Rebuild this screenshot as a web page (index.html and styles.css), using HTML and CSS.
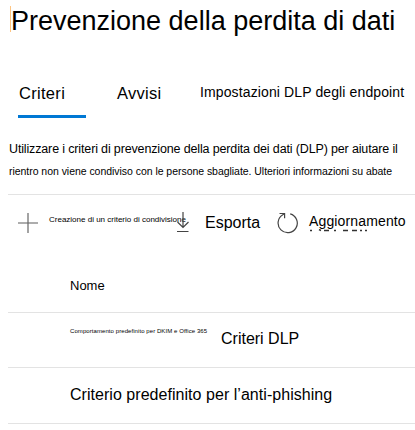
FILE: index.html
```html
<!DOCTYPE html>
<html lang="it">
<head>
<meta charset="utf-8">
<title>Prevenzione della perdita di dati</title>
<link rel="stylesheet" href="styles.css">
</head>
<body>
<main class="page">
  <h1 class="title"><span>Prevenzione della perdita di dati</span></h1>
  <nav class="tabs">
    <a class="tab tab-active"><span>Criteri</span></a>
    <a class="tab tab-alerts"><span>Avvisi</span></a>
    <a class="tab tab-settings"><span>Impostazioni DLP degli endpoint</span></a>
  </nav>
  <div class="intro">
    <p class="intro-main"><span>Utilizzare i criteri di prevenzione della perdita dei dati (DLP) per aiutare il</span></p>
    <p class="intro-sub"><span>rientro non viene condiviso con le persone sbagliate. Ulteriori informazioni su abate</span></p>
  </div>
  <div class="toolbar">
    <svg class="icon icon-add" viewBox="0 0 20 20"><path d="M0 10H20" stroke="#777" stroke-width="1.2"/><path d="M10 0V20" stroke="#666" stroke-width="1.2"/></svg>
    <span class="create">Creazione di un criterio di condivisione</span>
    <svg class="icon icon-export" viewBox="0 0 14 21"><path d="M7 0V15.5M1.5 10L7 15.5L12.5 10M1 19.5H12.5" fill="none" stroke="#444" stroke-width="1.2"/></svg>
    <span class="export">Esporta</span>
    <svg class="icon icon-refresh" viewBox="0 0 22 22"><path d="M13.2 1.8A9.6 9.6 0 1 1 5.8 2.8L7.6 1.5M2.5 1.5H7.6V6.3" fill="none" stroke="#444" stroke-width="1.2"/></svg>
    <span class="refresh">Aggiornamento
      <svg class="marks" viewBox="0 0 60 3"><path d="M1 1.5H3M10 .5L12 1.5M15 1.5H20M25 1.5H27M34 1.5H39M43 1.5H48M51 1.5H53M56 1.5H58" fill="none" stroke="#333" stroke-width="1.4"/></svg>
    </span>
  </div>
  <section class="list">
    <div class="row row-head"><span>Nome</span></div>
    <div class="row row-first"><span class="tiny">Comportamento predefinito per DKIM e Office 365</span><span class="dlp">Criteri DLP</span></div>
    <div class="row row-last"><span>Criterio predefinito per l’anti-phishing</span></div>
  </section>
</main>
</body>
</html>
```
FILE: styles.css
```css
* { box-sizing: border-box; }
body { margin: 0; background: #fff; color: #000; font-family: "Liberation Sans", Arial, sans-serif; overflow: hidden; }
.page { width: 415px; height: 430px; padding-left: 8px; white-space: nowrap; }
.title { position: relative; margin: 0; padding-left: 3px; height: 42px; line-height: 42px; font-size: 27px; font-weight: 400; }
.title::before { content: ""; position: absolute; left: 2px; top: 6px; width: 1px; height: 26px; background: #ffc581; }
.tabs { display: flex; height: 76px; padding: 34px 0 0 10px; font-size: 16.5px; letter-spacing: .3px; line-height: 35px; }
.tab-active { width: 68px; height: 42px; padding-left: 1px; border-bottom: 3px solid #0078d4; }
.tab-alerts { width: 114px; padding-left: 31px; }
.tab-settings { font-size: 14px; letter-spacing: .12px; line-height: 32px; }
.intro { height: 76px; padding: 20px 0 0 1px; }
.intro p { margin: 0; }
.intro-main { font-size: 12.5px; letter-spacing: -.145px; line-height: 22px; }
.intro-sub { font-size: 10.5px; letter-spacing: -.04px; line-height: 22px; }
.toolbar { display: flex; height: 63px; border-top: 1px solid #e3e3e3; }
.icon { flex: none; display: block; }
.icon-add { width: 20px; height: 20px; margin: 18px 0 0 10px; }
.create { width: 125px; margin-left: 11px; font-size: 8px; line-height: 50px; }
.icon-export { width: 14px; height: 21px; margin: 17px 0 0 2px; }
.export { width: 70px; margin-left: 15px; font-size: 16px; line-height: 55px; }
.icon-refresh { width: 22px; height: 22px; margin: 17px 0 0 2px; }
.refresh { position: relative; margin-left: 10px; font-size: 14px; letter-spacing: .14px; line-height: 52px; }
.marks { position: absolute; left: 0; top: 34px; width: 60px; height: 3px; }
.row { display: flex; padding-left: 62px; border-bottom: 1px solid #e3e3e3; }
.row-head { height: 56px; font-size: 13px; line-height: 57px; }
.row-first { height: 55px; }
.tiny { width: 151px; font-size: 6px; letter-spacing: .075px; line-height: 36px; }
.dlp { font-size: 16px; line-height: 51px; }
.row-last { height: 56px; font-size: 16px; letter-spacing: .04px; line-height: 53px; }
```
